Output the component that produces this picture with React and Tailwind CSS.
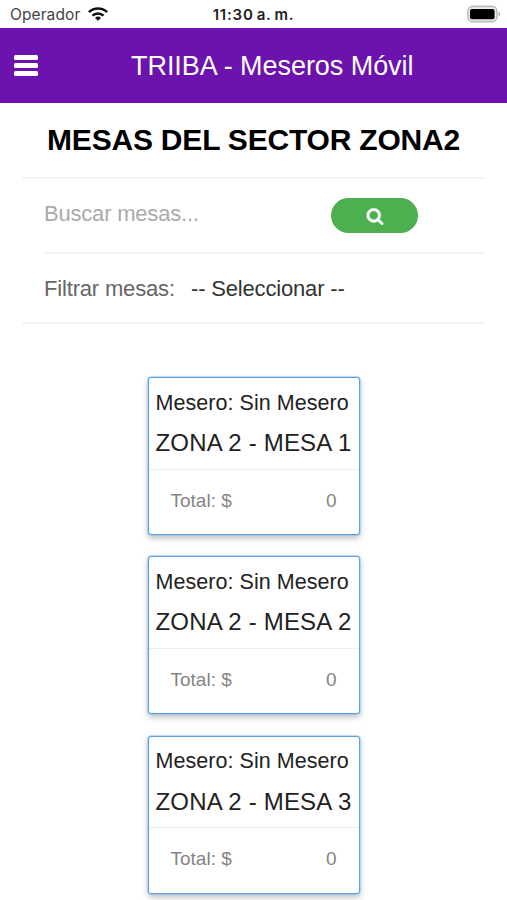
const tables = ["ZONA 2 - MESA 1", "ZONA 2 - MESA 2", "ZONA 2 - MESA 3"];

function WifiIcon() {
  return (
    <svg className="ml-[8px] mt-[7px] h-[14px] w-5" viewBox="0 0 20 14" fill="none" stroke="#111" strokeWidth="2.5">
      <path d="M0.9 5.1a13.2 13.2 0 0 1 18.2 0" />
      <path d="M4.4 8.7a8.1 8.1 0 0 1 11.2 0" />
      <path d="M10 13.8 7 10.9a4.4 4.4 0 0 1 6 0Z" fill="#111" stroke="none" />
    </svg>
  );
}

function BatteryIcon() {
  return (
    <svg className="mt-[5px] h-[18px] w-[34px]" viewBox="0 0 34 18">
      <rect x="0.9" y="1.4" width="29" height="15.2" rx="4.6" fill="#eee" stroke="#bdbdbd" strokeWidth="1.6" />
      <rect x="3" y="3.9" width="24.6" height="10.3" rx="2" fill="#000" />
      <path d="M31.6 6.6q1.7.8 1.7 2.4t-1.7 2.4Z" fill="#aaa" />
    </svg>
  );
}

function SearchIcon() {
  return (
    <svg className="h-[18px] w-[18px]" viewBox="0 0 1792 1792" fill="#fff" stroke="#fff" strokeWidth="40">
      <path d="M1216 832q0-185-131.5-316.5t-316.5-131.5-316.5 131.5-131.5 316.5 131.5 316.5 316.5 131.5 316.5-131.5 131.5-316.5zm512 832q0 52-38 90t-90 38q-54 0-90-38l-343-342q-179 124-399 124-143 0-273.5-55.5t-225-150-150-225-55.5-273.5 55.5-273.5 150-225 225-150 273.5-55.5 273.5 55.5 225 150 150 225 55.5 273.5q0 220-124 399l343 343q37 37 37 90z" />
    </svg>
  );
}

function TableCard({ name }) {
  return (
    <article className="h-[158px] w-[212px] shrink-0 rounded-[3px] border border-[#58a2e8] bg-white shadow-[0_0_0_0.5px_#8fc0ee,0_3px_6px_rgba(0,0,0,0.28)]">
      <div className="h-[91.5px] border-b border-[#eeeeee] pl-[7px] pt-[10.6px] whitespace-nowrap text-[#222]">
        <p className="text-[21.5px] leading-[28px] tracking-[0.05px]">Mesero: Sin Mesero</p>
        <p className="mt-[11.4px] text-[24px] leading-[30px] tracking-[0.17px]">{name}</p>
      </div>
      <div className="flex justify-between pl-[22px] pr-[22px] pt-[19.3px] text-[19px] leading-[24px] text-[#858585]">
        <span>Total: $</span>
        <span>0</span>
      </div>
    </article>
  );
}

export default function App() {
  return (
    <div className="h-[900px] w-[507px] overflow-hidden bg-white font-['Liberation_Sans',Arial,sans-serif]">
      <div className="grid h-7 grid-cols-[1fr_auto_1fr] font-['Inter','Liberation_Sans',sans-serif]">
        <div className="flex pl-[10px]">
          <span className="pt-[4px] text-[15.5px] leading-[22px] tracking-[0.1px] text-[#444]">Operador</span>
          <WifiIcon />
        </div>
        <div className="pt-[4px] text-[15px] font-semibold leading-[22px] tracking-[0.8px] [word-spacing:-1.5px] text-[#222]">
          11:30 a. m.
        </div>
        <div className="flex justify-end pr-[6px]">
          <BatteryIcon />
        </div>
      </div>
      <header className="flex h-[75px] items-center bg-[#6c12ad] text-white">
        <button aria-label="Menú" className="ml-[14px] flex w-6 flex-col gap-[3px]">
          <span className="h-[5px] rounded-[1.5px] bg-white" />
          <span className="h-[5px] rounded-[1.5px] bg-white" />
          <span className="h-[5px] rounded-[1.5px] bg-white" />
        </button>
        <h1 className="ml-[93px] whitespace-nowrap text-[27px] leading-[34px] tracking-[-0.05px]">TRIIBA - Meseros Móvil</h1>
      </header>
      <main>
        <h2 className="h-[74px] pt-[18px] text-center text-[30px] font-bold leading-[38px] tracking-[-0.2px] whitespace-nowrap text-black">
          MESAS DEL SECTOR ZONA2
        </h2>
        <div className="mx-[22px] h-[147px] border-y-2 border-[#f4f4f4]">
          <div className="ml-[22px] flex h-[75px] border-b-2 border-[#f4f4f4]">
            <span className="w-[287px] pt-[21px] text-[22px] leading-[28px] tracking-[-0.2px] text-[#aaa]">Buscar mesas...</span>
            <button aria-label="Buscar" className="mt-[19px] flex h-[35px] w-[87px] items-center justify-center rounded-full bg-[#4caf50]">
              <SearchIcon />
            </button>
          </div>
          <div className="ml-[22px] flex pt-[21px] text-[22px] leading-[28px] tracking-[-0.17px] whitespace-nowrap">
            <span className="w-[147px] text-[#666]">Filtrar mesas:</span>
            <span className="text-[#333]">-- Seleccionar --</span>
          </div>
        </div>
        <section className="flex flex-col items-center gap-[21.3px] pt-[53px]">
          {tables.map((name) => (
            <TableCard key={name} name={name} />
          ))}
        </section>
      </main>
    </div>
  );
}
